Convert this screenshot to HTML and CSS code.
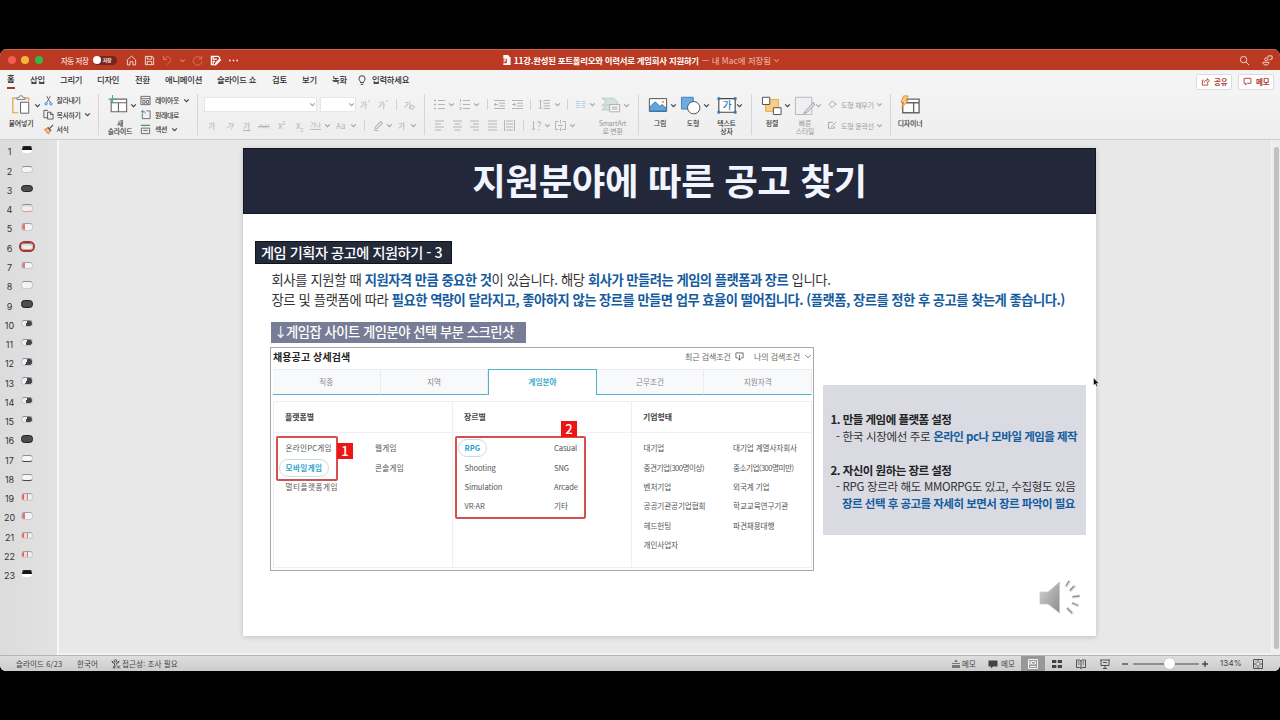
FILE: index.html
```html
<!DOCTYPE html>
<html lang="ko">
<head>
<meta charset="utf-8">
<title>PowerPoint</title>
<link rel="stylesheet" href="styles.css">
</head>
<body>
<svg width="0" height="0" class="defs">
  <symbol id="chev" viewBox="0 0 6 6"><path d="M1 2l2 2 2-2" fill="none" stroke="currentColor" stroke-width="1"/></symbol>
</svg>
<div class="window">
  <header class="titlebar">
    <div class="lights"><i class="red"></i><i class="yellow"></i><i class="green"></i></div>
    <span class="autosave">자동 저장</span>
    <span class="toggle"><i></i><b>저장</b></span>
    <svg class="q" viewBox="0 0 12 12"><path d="M1.500 5.300L6 1.200l4.500 4.100V10.800H7.600V7.300H4.400v3.500H1.500z"/></svg>
    <svg class="q" viewBox="0 0 12 12"><path d="M1.500 1.500h7.500l1.500 1.500v7.500h-9zM3.500 1.500v3h5v-3M3.500 10.500V7h5v3.500"/></svg>
    <svg class="q dim" viewBox="0 0 12 12"><path d="M1.500 1v4h4M1.800 4.800C4 1.500 7.500 1.500 9 3.500c1.500 2.300-.5 4-3.500 7"/></svg>
    <svg class="qc dim"><use href="#chev"/></svg>
    <svg class="q dim" viewBox="0 0 12 12"><path d="M10.500 1v3.500H7M10.300 4.300A4.700 4.700 0 1 0 10.800 7"/></svg>
    <svg class="q bold" viewBox="0 0 12 12"><path d="M5 10.500H1.500v-9h7.500l1.500 1.500v1M3.500 1.500v3h4M3.500 10V7h2M6 10.500l.5-2 4-4 1 1-4 4z"/></svg>
    <svg class="q fill" viewBox="0 0 12 12"><circle cx="2" cy="6" r="1"/><circle cx="6" cy="6" r="1"/><circle cx="10" cy="6" r="1"/></svg>
    <div class="doc">
      <svg viewBox="0 0 9 11"><path d="M1 0h5l3 3v8H1z" fill="#fff"/><path d="M0 4h5v5H0z" fill="#c8492f"/><path d="M2 8V5h1.500v1.500H2M6 0v3h3" stroke="#fff" stroke-width=".8" fill="none"/></svg>
      <b>11강.완성된 포트폴리오와 이력서로 게임회사 지원하기</b>
      <span>— 내 Mac에 저장됨</span>
      <svg class="dc"><use href="#chev"/></svg>
    </div>
    <svg class="q" viewBox="0 0 12 12"><circle cx="5" cy="5" r="3.500"/><path d="M7.600 7.600L11 11"/></svg>
    <svg class="q" viewBox="0 0 12 12"><circle cx="4.500" cy="4.700" r="1.600"/><path d="M1 8h6.500c0 4-6.500 4-6.500 0zM6.500 3V1h4.500v3.500H9L7.500 6"/></svg>
  </header>
  <nav class="tabs">
    <span class="on">홈</span><span>삽입</span><span>그리기</span><span>디자인</span><span>전환</span><span>애니메이션</span><span>슬라이드 쇼</span><span>검토</span><span>보기</span><span>녹화</span>
    <svg class="bulb" viewBox="0 0 8 11"><path d="M2.500 7.500C2.500 6 1 5.500 1 3.700a3 3 0 0 1 6 0C7 5.500 5.500 6 5.500 7.500zM2.700 9.300h2.600"/></svg>
    <span class="tell">입력하세요</span>
    <span class="btn"><svg viewBox="0 0 10 10"><path d="M3 3.500H1.500v5.500h6V7M3.500 6.500C3.700 4.500 5 3.500 7 3.500V1.800L9.300 4.300 7 6.500V5"/></svg>공유</span>
    <span class="btn"><svg viewBox="0 0 10 10"><path d="M1.200 1.500h7.600v5.500H4.800L3 8.800V7H1.200z"/></svg>메모</span>
  </nav>
  <section class="ribbon">
    <div class="group g1">
      <div class="big"><svg viewBox="0 0 22 24"><path d="M7 4.500H2v16h6M15 4.500h4.500V8" fill="none" stroke="#e5a13c" stroke-width="1.300"/><path d="M6.500 6V4h2.200a2.300 2.300 0 0 1 4.600 0h2.200v2z" fill="#f7f7f7" stroke="#777"/><path d="M10.500 9h9v12h-9z" fill="#fff" stroke="#555"/></svg><span>붙여넣기</span></div>
      <svg class="c"><use href="#chev"/></svg>
      <div class="list">
        <div><svg viewBox="0 0 12 12"><path d="M4 1l4 7.500M8 1L4 8.500" stroke="#666"/><circle cx="3.300" cy="9.600" r="1.300" stroke="#3a86c8"/><circle cx="8.700" cy="9.600" r="1.300" stroke="#3a86c8"/></svg><span>잘라내기</span></div>
        <div><svg viewBox="0 0 12 12"><path d="M5 9.500H1V1.500h4.500M5 3.500h3.500l2.500 2.500v5H5zM8 3.500V6h3" stroke="#555"/></svg><span>복사하기</span><svg class="c"><use href="#chev"/></svg></div>
        <div><svg viewBox="0 0 12 12"><path d="M11 1L7 5M5 3.500l4 4" stroke="#555" stroke-width="1.300"/><path d="M4.800 4.500L1.500 6l4.500 5 2-3.500z" fill="#f6b98b" stroke="#d97b3d"/></svg><span>서식</span></div>
      </div>
    </div>
    <div class="group g2">
      <div class="big"><svg viewBox="0 0 22 24"><path d="M3.500 5.500h17v14h-17zM3.500 9.500h17M11.500 9.500v10" fill="#fff" stroke="#666" stroke-width="1.200"/><path d="M5 1v9M.5 5.500h9" stroke="#4fae86" stroke-width="1.200"/></svg><span>새<br>슬라이드</span></div>
      <svg class="c"><use href="#chev"/></svg>
      <div class="list">
        <div><svg viewBox="0 0 12 12"><path d="M1 1.500h10v9H1zM1 4h10M3 6h2.500v3H3zM7 6h2.500v3H7z" stroke="#666"/></svg><span>레이아웃</span><svg class="c"><use href="#chev"/></svg></div>
        <div><svg viewBox="0 0 12 12"><path d="M2.500 5v5.500H11V2H7" stroke="#666"/><path d="M6 5C6 3 4 2 2 3M3.500 1L1.500 3 4 4.500" stroke="#3a86c8"/></svg><span>원래대로</span></div>
        <div><svg viewBox="0 0 12 12"><path d="M1 1.500h10" stroke="#3f9a72" stroke-width="1.600"/><path d="M1.500 4.500h9v6h-9zM3.500 7h5" stroke="#666"/></svg><span>섹션</span><svg class="c"><use href="#chev"/></svg></div>
      </div>
    </div>
    <div class="group g3">
      <div class="r1">
        <i class="combo"><svg class="c"><use href="#chev"/></svg></i><i class="combo"><svg class="c"><use href="#chev"/></svg></i>
        <span>가<sup>^</sup></span><span>가<sup>ˇ</sup></span><i class="bar"></i>
        <span class="clr">가<svg viewBox="0 0 6 6"><path d="M1 3.500l2.500-2.500 2 2L3 5.500z" fill="#eee" stroke="#b9a9c4"/></svg></span>
      </div>
      <div class="r2">
        <span>가</span><span><em>가</em></span><span><u>가</u></span><span class="st">가나다</span><span>X<sup>2</sup></span><span>X<sub>2</sub></span>
        <span class="sp">가나</span><svg class="c"><use href="#chev"/></svg><span class="aa">Aa</span><svg class="c"><use href="#chev"/></svg><i class="bar"></i>
        <svg class="t" viewBox="0 0 10 10"><path d="M2 8l.5-2L7 1.500l1.500 1.500L4 7.500zM1 9.500h4"/></svg><svg class="c"><use href="#chev"/></svg><span>가</span><svg class="c"><use href="#chev"/></svg>
      </div>
    </div>
    <div class="group g4">
      <div class="rows">
        <div class="r1">
          <svg class="t" viewBox="0 0 11 11"><path d="M4 1.500h7M4 5.500h7M4 9.500h7"/><path d="M0 1.500h2M0 5.500h2M0 9.500h2" stroke="#9dbbd0" stroke-width="1.500"/></svg><svg class="c"><use href="#chev"/></svg>
          <svg class="t" viewBox="0 0 11 11"><path d="M4 1.500h7M4 5.500h7M4 9.500h7M1.500 0v3M.5 5h1.500M.5 8.500H2v2H.5"/></svg><svg class="c"><use href="#chev"/></svg><i class="bar"></i>
          <svg class="t" viewBox="0 0 11 11"><path d="M0 1.500h11M5 4.200h6M5 6.900h6M0 9.500h11M4 5.500H0M2 4L.5 5.500 2 7"/></svg>
          <svg class="t" viewBox="0 0 11 11"><path d="M0 1.500h11M5 4.200h6M5 6.900h6M0 9.500h11M0 5.500h4M2 4l1.500 1.500L2 7"/></svg><i class="bar"></i>
          <svg class="t" viewBox="0 0 11 11"><path d="M4.500 1.500H11M4.500 4.200H11M4.500 6.900H11M4.500 9.500H11M1.500 1v9M0 2.500L1.500 1 3 2.500M0 8.500L1.500 10 3 8.500"/></svg><svg class="c"><use href="#chev"/></svg><i class="bar"></i>
          <svg class="t" viewBox="0 0 11 11"><path d="M1 2.500h4M1 4.500h4M1 6.500h4M1 8.500h4M6.500 2.500h4M6.500 4.500h4M6.500 6.500h4M6.500 8.500h4" stroke="#b9d3e4"/></svg><svg class="c"><use href="#chev"/></svg>
        </div>
        <div class="r2">
          <svg class="t" viewBox="0 0 11 11"><path d="M1 1h9M1 4h6M1 7h9M1 10h6"/></svg>
          <svg class="t" viewBox="0 0 11 11"><path d="M1 1h9M2.500 4h6M1 7h9M2.500 10h6"/></svg>
          <svg class="t" viewBox="0 0 11 11"><path d="M1 1h9M4 4h6M1 7h9M4 10h6"/></svg>
          <svg class="t" viewBox="0 0 11 11"><path d="M1 1h9M1 4h9M1 7h9M1 10h9"/></svg>
          <svg class="t" viewBox="0 0 11 11"><path d="M.5 0v11M10.500 0v11M2 1h7M2 4h7M2 7h7M2 10h7"/></svg><i class="bar"></i>
          <svg class="t" viewBox="0 0 11 11"><path d="M2.500 1v9M1 8.500l1.500 1.500L4 8.500M6 2h3.500v2L8 5.500V7M8 9v1.500"/></svg><svg class="c"><use href="#chev"/></svg>
          <svg class="t" viewBox="0 0 11 11"><path d="M3.500 1.500H.5v8h3M7.500 1.500h3v8h-3M5.500 0v3.500M5.500 7.500V11M3 5.500h5"/></svg><svg class="c"><use href="#chev"/></svg>
        </div>
      </div>
      <div class="big off"><svg viewBox="0 0 22 24"><path d="M1 4.500h13l5 5-3 3H1l5-4z" fill="#d3e3da" stroke="#b2cdbf"/><path d="M1 17.500l5-6h4v6z" fill="#d3e3da" stroke="#b2cdbf"/><path d="M9.500 11.500h11v8h-11zM12 14.500h6M12 16.500h6" fill="#f4f4f4" stroke="#aaa"/></svg><span>SmartArt<br>로 변환</span></div>
      <svg class="c"><use href="#chev"/></svg>
    </div>
    <div class="group g5">
      <div class="big"><svg viewBox="0 0 22 24"><path d="M1.500 5h19v14h-19z" fill="#fff" stroke="#444"/><path d="M2 14l6-5.500 5 5 2.500-2 4.500 4V18.500H2z" fill="#62a5dd" stroke="#2f7ab9"/><circle cx="16.500" cy="8.500" r="1.300" fill="#f0a13a" stroke="none"/></svg><span class="nudge">그림</span></div>
      <svg class="c"><use href="#chev"/></svg>
      <div class="big"><svg viewBox="0 0 22 24"><path d="M.5 3.500h13v13H.5z" fill="#6dabe0" stroke="#3b7fbb"/><circle cx="14" cy="15" r="6.800" fill="#fff" stroke="#444"/></svg><span class="nudge">도형</span></div>
      <svg class="c"><use href="#chev"/></svg>
      <div class="big tb"><svg viewBox="0 0 22 24"><path d="M2 5h18v15H2z" fill="#fff" stroke="#444" stroke-width="1.200"/><path d="M.8 3.800h2.400v2.400H.8zM18.800 3.800h2.400v2.400h-2.400zM.8 18.800h2.400v2.400H.8zM18.800 18.800h2.400v2.400h-2.400z" fill="#2f7ab9" stroke="#2f7ab9" stroke-width=".6"/><text x="11" y="16.500" text-anchor="middle" font-size="11" fill="#2f7ab9">가</text></svg><span>텍스트<br>상자</span></div>
      <svg class="c"><use href="#chev"/></svg>
    </div>
    <div class="group g6">
      <div class="big"><svg viewBox="0 0 22 24"><path d="M4 6h14v13H4z" fill="#f8cf85" stroke="#e3a643"/><path d="M.5 3.500h8v8h-8zM12.500 15h8.500v7.500h-8.500z" fill="#fff" stroke="#444"/></svg><span>정렬</span></div>
      <svg class="c"><use href="#chev"/></svg>
      <div class="big off"><svg viewBox="0 0 22 24"><path d="M.5 3.500h18v19H.5z" fill="#f0f0f2" stroke="#b5b5b9"/><path d="M20.500 9l-8.500 9-2.500 3.500 4-1.500 8-8z" fill="#dcdce4" stroke="#9b9ba5"/></svg><span>빠른<br>스타일</span></div>
      <svg class="c off"><use href="#chev"/></svg>
      <div class="list2">
        <div><svg viewBox="0 0 10 10"><path d="M1 5l4-4 3.500 3.500-4 4zM8 3.500l1.500 2"/></svg><span>도형 채우기</span><svg class="c"><use href="#chev"/></svg></div>
        <div><svg viewBox="0 0 10 10"><path d="M5.500 1.500h-5v6.500h6.500V5.500"/><path d="M3.500 6.500L9 1" stroke="#8fb6a4"/></svg><span>도형 윤곽선</span><svg class="c"><use href="#chev"/></svg></div>
      </div>
    </div>
    <div class="group g7">
      <div class="big"><svg viewBox="0 0 22 24"><path d="M3 5.500h18v15H3zM3 9.500h18M15 9.500v11" fill="#fff" stroke="#666" stroke-width="1.500"/><path d="M4 2h5L6.500 7H9l-7 8 2-6H1z" fill="#fbc88b" stroke="#e88d2e"/></svg><span>디자이너</span></div>
    </div>
  </section>
  <main class="work">
    <ol class="thumbs">
      <li>1<i class="cap"></i></li><li>2<i></i></li><li>3<i class="dk"></i></li><li>4<i class="rd"></i></li><li>5<i class="rl"></i></li><li>6<i class="rd sel"></i></li><li>7<i class="rl"></i></li><li>8<i></i></li><li>9<i class="dk"></i></li><li>10<i class="hf"></i></li><li>11<i class="hf"></i></li><li>12<i class="hf"></i></li><li>13<i class="hf"></i></li><li>14<i class="hf"></i></li><li>15<i class="hf"></i></li><li>16<i class="dk"></i></li><li>17<i class="ft"></i></li><li>18<i class="ft"></i></li><li>19<i class="rr"></i></li><li>20<i class="rl"></i></li><li>21<i class="rr"></i></li><li>22<i class="rr"></i></li><li>23<i class="cap"></i></li>
    </ol>
    <div class="stage">
      <article class="slide">
        <h1>지원분야에 따른 공고 찾기</h1>
        <h2>게임 기획자 공고에 지원하기 - 3</h2>
        <p class="lead">회사를 지원할 때 <b>지원자격 만큼 중요한 것</b>이 있습니다. 해당 <b>회사가 만들려는 게임의 플랫폼과 장르</b> 입니다.<br>장르 및 플랫폼에 따라 <b>필요한 역량이 달라지고, 좋아하지 않는 장르를 만들면 업무 효율이 떨어집니다. (플랫폼, 장르를 정한 후 공고를 찾는게 좋습니다.)</b></p>
        <h3><span>↓</span>게임잡 사이트 게임분야 선택 부분 스크린샷</h3>
        <div class="row">
          <div class="shot">
            <div class="shot-head"><b>채용공고 상세검색</b><span>최근 검색조건</span><svg viewBox="0 0 10 10"><path d="M3 6.500H1V1h8v5.500H7M5 3.500V9M3 7l2 2 2-2"/></svg><span>나의 검색조건</span><svg class="sc" viewBox="0 0 8 10"><path d="M1 3.500l3 3 3-3"/></svg></div>
            <div class="shot-tabs"><span>직종</span><span>지역</span><span class="on">게임분야</span><span>근무조건</span><span>지원자격</span></div>
            <div class="cols">
              <div class="col first"><h4>플랫폼별</h4><ul><li>온라인PC게임</li><li>웹게임</li><li><em class="pill">모바일게임</em></li><li>콘솔게임</li><li class="wide">멀티플랫폼게임</li></ul><i class="mark m1"><b>1</b></i></div>
              <div class="col"><h4>장르별</h4><ul><li><em class="pill">RPG</em></li><li>Casual</li><li>Shooting</li><li>SNG</li><li>Simulation</li><li>Arcade</li><li>VR·AR</li><li>기타</li></ul><i class="mark m2"><b>2</b></i></div>
              <div class="col"><h4>기업형태</h4><ul><li>대기업</li><li>대기업 계열사자회사</li><li class="tight">중견기업(300명이상)</li><li class="tight">중소기업(300명미만)</li><li>벤처기업</li><li>외국계 기업</li><li>공공기관공기업협회</li><li>학교교육연구기관</li><li>헤드헌팅</li><li>파견채용대행</li><li>개인사업자</li></ul></div>
            </div>
          </div>
          <aside class="notes">
            <b class="nh">1. 만들 게임에 플랫폼 설정</b>
            <p>- 한국 시장에선 주로 <b>온라인 pc나 모바일 게임을 제작</b></p>
            <b class="nh second">2. 자신이 원하는 장르 설정</b>
            <p>- RPG 장르라 해도 MMORPG도 있고, 수집형도 있음</p>
            <p class="in"><b>장르 선택 후 공고를 자세히 보면서 장르 파악이 필요</b></p>
          </aside>
        </div>
        <svg class="speaker" viewBox="0 0 44 42">
          <defs><linearGradient id="g" x1="0" x2="1" y1="0" y2="1"><stop offset="0" stop-color="#d2d2d2"/><stop offset="1" stop-color="#8b8b8b"/></linearGradient></defs>
          <path d="M2 14h8L21.500 4v31L10 26H2z" fill="url(#g)" stroke="#c9c9c9" stroke-width=".8"/>
          <g stroke="#e4e4e4" stroke-width="3.500"><path d="M28 9l4-6.500M31.500 13.500l6-6M34 19l8-1M34 25l7 3M29 30l6 6"/></g>
          <g stroke="#8e8e8e" stroke-width="1.300"><path d="M28 8l3-5M32 12.500l4-4.500M34.500 18.800l7-.8M34 25l6 2.500M29 30l5 5"/></g>
        </svg>
      </article>
    </div>
    <div class="scroll"><i></i></div>
  </main>
  <footer class="status">
    <span>슬라이드 6/23</span><span>한국어</span>
    <svg viewBox="0 0 10 10"><circle cx="4.500" cy="1.800" r="1.200"/><path d="M1 3.500l2.500.7v2L2 9.500M8 3.500l-2.500.7v1.500M4.500 6.500l-1 3M6 6.500l3 3M9 6.500l-3 3M.5 2l2 1M8.500 2l-2 1"/></svg>
    <span>접근성: 조사 필요</span>
    <svg class="f soft" viewBox="0 0 10 10"><path d="M3 3l2-2.500L7 3zM1 4h8v1H1zM1 6h8v3H1z"/></svg><span>메모</span>
    <svg class="f" viewBox="0 0 10 10"><path d="M.5 1.500h9v6H5L3 9.500v-2H.5z"/></svg><span>메모</span>
    <span class="act"><svg viewBox="0 0 10 10"><path d="M.5.5h9v9h-9zM3.500 2.500h4v2.500h-4zM2 7.500h6M2 2v4"/></svg></span>
    <svg class="f" viewBox="0 0 10 10"><path d="M0 1h4.300v3H0zM5.700 1H10v3H5.700zM0 6h4.300v3H0zM5.700 6H10v3H5.700z"/></svg>
    <svg viewBox="0 0 10 10"><path d="M5 2v7.500M.5 1h3L5 2l1.500-1h3v7.500h-3L5 9.500l-1.500-1h-3zM2 3h1.500M2 5h1.500M6.500 3H8M6.500 5H8"/></svg>
    <svg viewBox="0 0 10 10"><path d="M0 1h10M1 1v5.500h8V1M3 3.500h4M5 6.500V9M3 9.500h4"/></svg>
    <svg class="z" viewBox="0 0 8 8"><path d="M1 4h6"/></svg>
    <span class="slider"><i></i></span>
    <svg class="z" viewBox="0 0 8 8"><path d="M1 4h6M4 1v6"/></svg>
    <span class="pct">134%</span>
    <svg viewBox="0 0 10 10"><path d="M.5.500h9v9h-9zM5 .5v3M5 6.500v3M.5 5h3M6.500 5h3M2.500 2.500l1 1M7.500 2.500l-1 1M2.500 7.500l1-1M7.500 7.500l-1-1"/></svg>
  </footer>
  <svg class="cursor" viewBox="0 0 8 12"><path d="M.5.500v9l2-1.800 1.300 3 1.500-.7L4 7.200h3z" fill="#111" stroke="#fff" stroke-width=".6"/></svg>
</div>
</body>
</html>
```
FILE: styles.css
```css
* { box-sizing: border-box; }
body { margin: 0; width: 1280px; height: 720px; overflow: hidden; background: #000; padding-top: 49px; font-family: "Noto Sans CJK KR", sans-serif; color: #333; }
h1, h2, h3, h4, p, ul, ol { margin: 0; padding: 0; }
ul, ol { list-style: none; }
i, em { font-style: normal; }
svg { display: block; fill: none; stroke: currentColor; overflow: visible; }
.defs { position: absolute; }
.window { position: relative; height: 622px; border-radius: 7px 7px 6px 6px; overflow: hidden; background: #e8e8e8; display: flex; flex-direction: column; white-space: nowrap; }

.titlebar { height: 21px; flex: none; background: #b93922; color: #f8ded8; display: flex; padding-left: 8px; align-items: center; border-top: 1px solid #c96450; }
.lights { display: flex; gap: 5.300px; width: 53px; }
.lights i { width: 8px; height: 8px; border-radius: 50%; }
.red { background: #f25e53; } .yellow { background: #f6b53c; } .green { background: #35b649; }
.autosave { font-size: 7.500px; width: 32px; letter-spacing: -.4px; font-weight: 500; }
.toggle { width: 24px; height: 9px; border-radius: 5px; background: #75261a; display: flex; align-items: center; margin-right: 9px; }
.toggle i { width: 8px; height: 8px; border-radius: 50%; background: #fff; }
.toggle b { font-size: 5px; margin-left: 2px; line-height: 8px; letter-spacing: -.3px; }
.q { width: 11px; height: 11px; margin-right: 7px; }
.q.dim, .qc.dim { color: #dc7b67; }
.q.bold { stroke-width: 1.300; color: #fff; }
.q.fill { fill: currentColor; stroke: none; }
.qc { width: 7px; height: 7px; margin: 0 6px 0 -1px; }
.doc { display: flex; align-items: center; margin-left: 256px; width: 739px; font-size: 8.400px; letter-spacing: -.22px; color: #fff; }
.doc svg { width: 9px; height: 10px; margin-right: 3px; stroke: none; }
.doc span { color: #eaa798; margin-left: 3px; font-weight: 500; letter-spacing: 0; }
.doc .dc { width: 7px; height: 7px; margin-left: 2px; color: #df8977; stroke: currentColor; }
.doc + .q { margin-right: 12px; }

.tabs { height: 20px; flex: none; display: grid; grid-template-columns: 23px 30px 37px 38px 30px 52px 55px 30px 30px 26px 14px 824px 42px 36px; padding-left: 7px; align-items: center; background: #f4f4f4; font-size: 8.300px; font-weight: 500; letter-spacing: -.2px; color: #2b2b2b; line-height: 17px; }
.tabs span:not(.btn):not(.on) { margin-top: -2px; }
.tabs .on { font-weight: 700; width: 8px; border-bottom: 2px solid #a5392a; height: 19px; line-height: 17px; align-self: start; }
.tabs .bulb { width: 8px; height: 11px; stroke-width: .9; }
.tabs .btn { background: #fff; border: 1px solid #dcdcdc; border-radius: 2px; height: 16px; width: 36px; color: #a8402f; display: flex; align-items: center; gap: 4px; padding-left: 4px; font-size: 7.500px; line-height: 14px; margin-top: 3px; font-weight: 700; }
.btn svg { width: 9px; height: 9px; }

.ribbon { height: 50px; flex: none; display: flex; background: linear-gradient(#f4f4f4, #eeeeee); border-bottom: 1px solid #cfcfcf; }
.group { position: relative; height: 49px; display: flex; padding-top: 4px; }
.group::after { content: ""; width: 1px; height: 41px; background: #d6d6d6; margin-left: auto; flex: none; }
.g7::after { display: none; }
.big { width: 20px; flex: none; display: flex; flex-direction: column; align-items: center; font-size: 6.900px; line-height: 8.200px; letter-spacing: -.2px; text-align: center; font-weight: 500; color: #333; }
.big svg { width: 20px; height: 22px; margin-bottom: 3px; }
.big.off { color: #999; font-weight: 400; }
.big text { stroke: none; }
.nudge { padding-left: 4px; }
.c { width: 7px; height: 7px; color: #444; flex: none; }
.group > .c { margin: 8px 0 0 2px; }
.list { font-size: 6.900px; letter-spacing: -.35px; font-weight: 500; line-height: 14.500px; margin-top: -1px; }
.list div { display: flex; align-items: center; height: 14.500px; }
.list div > svg:first-child { width: 11px; height: 11px; margin-right: 3px; }
.list .c { margin-left: 4px; }
.g1 { width: 99px; padding-left: 11px; }
.g1 .list { margin-left: 2px; }
.g1 > .c { margin-left: 2.500px; }
.g2 { width: 99px; padding-left: 9px; }
.g2 .big span { padding-left: 4px; }
.g2 .list { margin-left: 3px; }
.g2 .list div > svg:first-child { margin-right: 4px; }
.r1, .r2 { display: grid; align-items: center; height: 21px; color: #b3b3b3; font-size: 8px; }
.r1 > *, .r2 > * { min-width: 0; }
.r1 .c, .r2 .c { color: #a5a5a5; }
.bar { width: 1px; height: 11px; background: #d2d2d2; }
.t { width: 11px; height: 11px; stroke: #b5b5b5; stroke-width: 1; }
.g3 { width: 227px; flex-direction: column; flex-wrap: wrap; }
.g3 .r1 { grid-template-columns: 116px 40px 18px 18px 8px 20px; padding-left: 6px; width: 226px; }
.g3 .r2 { grid-template-columns: 18px 17px 15px 20px 18px 14px 14px 12px 14px 14px 9px 13px 12px 12px 8px; padding-left: 10px; width: 226px; }
.combo { background: #fff; border: 1px solid #e6e6e6; height: 15px; width: 113px; display: flex; align-items: center; justify-content: flex-end; }
.combo + .combo { width: 36px; }
.g3 sup, .g3 sub { font-size: 5px; line-height: 0; }
.g3 em { font-style: italic; }
.st { text-decoration: line-through; font-size: 5px; letter-spacing: -.8px; }
.sp { font-size: 6px; border-bottom: 1px solid #a9c3d4; line-height: 8px; letter-spacing: -.3px; width: 11px; }
.clr { display: flex; align-items: center; }
.clr svg { width: 6px; height: 6px; margin: 4px 0 0 -2px; }
.g4 { width: 214px; padding-left: 9px; }
.rows { width: 168px; }
.g4 .r1 { grid-template-columns: 14px 11px 14px 14px 7px 18px 18px 9px 15px 13px 8px 14px 8px; }
.g4 .r2 { grid-template-columns: 18px 17px 18px 17px 19px 8px 13px 11px 14px 8px; }
.g4 .big { margin-left: -1px; width: 20px; }
.g4 > .c { color: #a5a5a5; }
.g4 .big span { width: 32px; padding-left: 3px; }
.g5 { width: 113px; padding-left: 9px; }
.g5 .c + .big { margin-left: 4px; }
.g5 .c + .tb { margin-left: 6.500px; }
.g5 .tb + .c { margin-left: -.5px; }
.g6 { width: 139px; padding-left: 10px; }
.g6 .c + .big { margin-left: 4px; }
.g6 .c.off { color: #aaa; margin-left: 0; }
.list2 { margin: 0 0 0 6px; font-size: 7.100px; letter-spacing: -.3px; color: #a0a0a0; }
.list2 div { display: flex; height: 21px; align-items: center; }
.list2 svg:first-child { width: 9px; height: 9px; margin-right: 4px; }
.list2 .c { color: #aaa; margin-left: 2px; }
.g7 { padding-left: 9px; }

.work { flex: 1; display: flex; min-height: 0; background: #e8e8e8; }
.thumbs { width: 59px; flex: none; background: linear-gradient(90deg, #dcdcdc, #e2e2e2); border-right: 2px solid #f8f8f8; padding-top: 2.400px; font: 9px/19.270px Inter, sans-serif; color: #333; }
.thumbs li { height: 19.270px; display: grid; grid-template-columns: 19px 16px; align-items: center; text-align: center; }
.thumbs i { width: 12px; height: 7.500px; border-radius: 3.500px; border: 1px solid #c9c9c9; border-top-color: #8e8e98; background: #f4f4f6; margin: -4px 0 0 2px; }
.thumbs .cap { background: linear-gradient(#15161c 55%, #fff 55%); border-color: #ddd; border-top-color: #222; }
.thumbs .dk { background: #4b4c50; border: 1.500px solid #222; }
.thumbs .rd { background: linear-gradient(#dfe0e6 40%, #f6ecec 40%); border-bottom-color: #d79a9a; }
.thumbs .rl { background: linear-gradient(90deg, #d97b7b 35%, #f3f3f6 35%); border-color: #ccc; border-top-color: #9aa0ac; }
.thumbs .rr { background: linear-gradient(90deg, #d66 20%, #f0d8d8 20% 50%, #d77 50% 65%, #eee 65%); border-color: #ccc; border-top-color: #9aa0ac; }
.thumbs .hf { background: linear-gradient(110deg, #eceef0 45%, #42464c 45%); border-color: #c5c8cc; border-top-color: #8e9298; }
.thumbs .ft { background: #f7f7f7; border-bottom-color: #444; }
.thumbs .sel { box-shadow: 0 0 0 2px #a33a2c; }
.stage { flex: 1; padding: 8px 0 0 184px; border-bottom: 2px solid #f2f2f2; }
.scroll { width: 9px; border-left: 1px solid #f4f4f4; background: #ededed; padding: 7px 0 0 1.500px; }
.scroll i { display: block; width: 5.500px; height: 502px; border-radius: 3px; background: #c1c1c1; }

.slide { width: 853px; height: 488px; background: #fff; box-shadow: 0 1px 5px rgba(0,0,0,.18); color: #333; display: flex; flex-direction: column; align-items: flex-start; }
.slide h1 { width: 853px; height: 66px; background: #23273a; border: 1px solid #141722; color: #f1f5ff; font-size: 36.500px; font-weight: 700; line-height: 62px; text-align: center; letter-spacing: -.4px; padding-right: 0; }
.slide h2 { margin: 27px 0 0 12px; width: 197px; height: 23px; background: #232a39; border: 1px solid #10131c; color: #fff; font-size: 14.200px; line-height: 21px; letter-spacing: -.45px; padding-left: 5px; font-weight: 500; }
.lead { margin: 6.400px 0 0 28.500px; font-size: 13.300px; line-height: 19.300px; letter-spacing: -.36px; }
.lead b { letter-spacing: -.52px; }
.lead b, .notes p b { color: #155c9f; }
.slide h3 { margin: 13.500px 0 0 28px; width: 255px; height: 21px; background: #777d96; color: #fff; font-size: 13.300px; line-height: 20px; letter-spacing: -.48px; font-weight: 500; display: flex; padding-left: 4px; }
.slide h3 span { width: 11px; display: flex; justify-content: center; font-weight: 400; }
.row { display: flex; margin: 4px 0 0 27px; }
.shot { width: 544px; height: 224px; border: 1px solid #a9a9a9; font-size: 7.600px; color: #555; }
.shot-head { height: 21px; display: flex; align-items: center; padding: 0 1px 5px 2px; color: #666; font-size: 8px; letter-spacing: -.05px; }
.shot-head b { font-size: 10px; color: #222; margin-right: auto; letter-spacing: .1px; }
.shot-head svg { width: 9px; height: 9px; margin: 0 10px 0 4px; }
.shot-head .sc { width: 8px; margin: 0 0 0 4px; }
.shot-tabs { display: flex; width: 539px; margin-left: 2px; height: 26px; line-height: 24px; text-align: center; color: #888; }
.shot-tabs span { flex: 1; background: #f8f9fb; border: 1px solid #ececef; border-left-width: 0; border-bottom-color: #4fb3cb; }
.shot-tabs .on { background: #fff; border: 1px solid #4fb3cb; border-bottom: 0; color: #3eabc9; font-weight: 700; }
.cols { display: grid; grid-template-columns: 179px 179px 180px; margin: 6px 0 0 2px; height: 167px; border: 1px solid #efefef; width: 539px; }
.col { position: relative; border-right: 1px solid #efefef; }
.col:last-child { border-right: 0; }
.col h4 { height: 31px; border-bottom: 1px solid #f1f1f1; line-height: 30px; font-size: 7.900px; color: #444; padding-left: 11px; }
.col ul { display: grid; grid-template-columns: 89.500px 80px; grid-auto-rows: 19.350px; align-items: center; padding: 4.500px 0 0 11.500px; line-height: 19px; letter-spacing: -.1px; }
.first ul { letter-spacing: .25px; }
.first .wide { letter-spacing: .5px; }
.tight { letter-spacing: -.52px; }
.wide { grid-column: span 2; }
.pill { display: inline-block; color: #2fa3cc; font-weight: 700; border: 1px solid #bfe0ea; border-radius: 9px; height: 18px; line-height: 16px; padding: 0 6px; margin-left: -7px; letter-spacing: 0; }
.first .pill { letter-spacing: .4px; }
.mark { position: absolute; border: 2px solid #d45050; border-radius: 2px; }
.mark b { position: absolute; width: 16px; height: 16px; background: #ef1414; color: #fff; font-size: 13px; line-height: 16px; text-align: center; font-weight: 500; }
.m1 { left: 2px; top: 34px; width: 62px; height: 45px; }
.m1 b { left: 59px; top: 5px; }
.m2 { left: 2px; top: 34px; width: 131px; height: 83px; }
.m2 b { left: 104px; top: -17px; }
.notes { margin: 38px 0 0 9px; width: 263px; height: 150px; background: #d9dae2; padding: 26px 0 0 7.500px; font-size: 11.500px; line-height: 16.700px; letter-spacing: -.33px; display: flex; flex-direction: column; }
.notes b { letter-spacing: -.52px; }
.nh { color: #222; }
.second { margin-top: 16.700px; }
.notes p { padding-left: 5.500px; }
.notes p.in { padding-left: 11.500px; }
.speaker { width: 44px; height: 42px; margin: 7px 0 0 795px; }

.status { height: 16px; flex: none; background: linear-gradient(#dedede, #cccccc); border-top: 1px solid #b5b5b5; display: grid; grid-template-columns: 61px 34px 11px 829px 11px 26px 13px 20px 31px 24px 24px 21px 9px 71px 19px 33px 10px; padding-left: 16px; align-items: center; font-size: 7.500px; color: #444; line-height: 13px; letter-spacing: .12px; }
.status > span:not(.act):not(.slider) { margin-top: -1px; }
.status svg { width: 10px; height: 10px; stroke-width: .9; }
.status .f { fill: currentColor; stroke: none; }
.status .soft { color: #777; }
.status .act { background: #989898; width: 24px; height: 15px; display: flex; align-items: center; justify-content: center; color: #fff; }
.status .z { width: 8px; height: 8px; stroke-width: 1.300; }
.slider { width: 66px; height: 2px; background: #8e8e8e; border-radius: 1px; margin-left: 3px; display: flex; align-items: center; justify-content: center; }
.slider i { width: 11px; height: 11px; border-radius: 50%; background: #fff; margin-left: 6px; box-shadow: 0 0 1px #888; }
.pct { font-family: Inter, sans-serif; font-size: 8px; }
.cursor { position: absolute; left: 1093px; top: 328px; width: 7px; height: 11px; }
```
